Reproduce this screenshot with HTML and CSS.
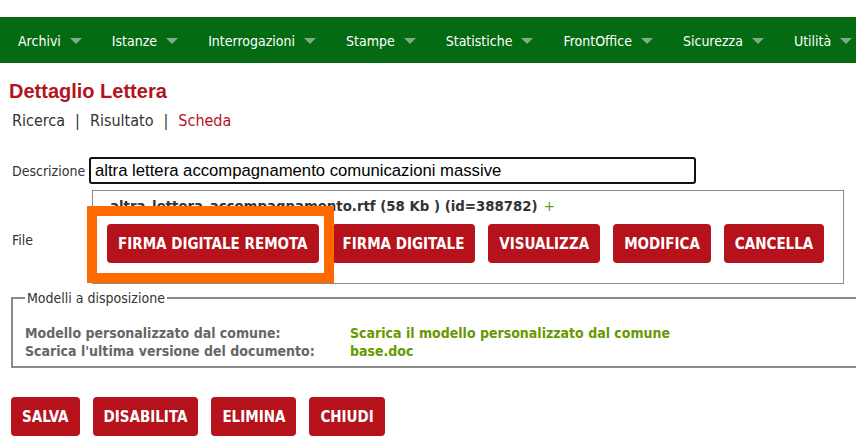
FILE: index.html
```html
<!DOCTYPE html>
<html lang="it">
<head>
<meta charset="utf-8">
<title>Dettaglio Lettera</title>
<link rel="stylesheet" href="styles.css">
</head>
<body>
<div class="page">
  <nav class="menu">
    <div class="menu-item">Archivi<span class="caret"></span></div>
    <div class="menu-item">Istanze<span class="caret"></span></div>
    <div class="menu-item">Interrogazioni<span class="caret"></span></div>
    <div class="menu-item">Stampe<span class="caret"></span></div>
    <div class="menu-item">Statistiche<span class="caret"></span></div>
    <div class="menu-item">FrontOffice<span class="caret"></span></div>
    <div class="menu-item">Sicurezza<span class="caret"></span></div>
    <div class="menu-item">Utilità<span class="caret"></span></div>
  </nav>

  <main class="content">
    <h1 class="title">Dettaglio Lettera</h1>
    <div class="crumbs">
      <span>Ricerca</span><span class="sep">|</span><span>Risultato</span><span class="sep">|</span><span class="current">Scheda</span>
    </div>

    <div class="form-row desc-row">
      <label class="label">Descrizione</label>
      <div class="input">altra lettera accompagnamento comunicazioni massive</div>
    </div>

    <div class="form-row file-row">
      <label class="label file-label">File</label>
      <div class="file-box">
        <div class="file-name">altra_lettera_accompagnamento.rtf (58 Kb ) (id=388782)<span class="plus">+</span></div>
        <div class="btn-row">
          <span class="btn-wrap">
            <button class="btn">FIRMA DIGITALE REMOTA</button>
            <span class="highlight"></span>
          </span>
          <button class="btn">FIRMA DIGITALE</button>
          <button class="btn">VISUALIZZA</button>
          <button class="btn">MODIFICA</button>
          <button class="btn">CANCELLA</button>
        </div>
      </div>
    </div>

    <fieldset class="models">
      <legend class="legend">Modelli a disposizione</legend>
      <div class="model-grid">
        <span class="model-key">Modello personalizzato dal comune:</span>
        <span class="model-link">Scarica il modello personalizzato dal comune</span>
        <span class="model-key">Scarica l'ultima versione del documento:</span>
        <span class="model-link">base.doc</span>
      </div>
    </fieldset>

    <div class="actions">
      <button class="btn">SALVA</button>
      <button class="btn">DISABILITA</button>
      <button class="btn">ELIMINA</button>
      <button class="btn">CHIUDI</button>
    </div>
  </main>
</div>
</body>
</html>
```

FILE: styles.css
```css
html, body {
  margin: 0;
  padding: 0;
  background: #ffffff;
  overflow: hidden;
}

.page {
  width: 900px;
  padding-top: 17px;
  font-family: "DejaVu Sans Condensed", "DejaVu Sans", sans-serif;
  color: #333333;
}

.menu {
  display: flex;
  height: 46px;
  align-items: center;
  background: #046b12;
}

.menu-item {
  display: flex;
  align-items: center;
  gap: 9px;
  padding: 1px 12px 0 18px;
  color: #ffffff;
  font-size: 14px;
}

.caret {
  width: 0;
  height: 0;
  border-left: 6px solid transparent;
  border-right: 6px solid transparent;
  border-top: 6px solid #80ae84;
}

.content {
  padding: 0 0 0 10px;
}

.title {
  margin: 17px 0 0 -1px;
  font-family: "Liberation Sans", Arial, sans-serif;
  font-size: 20px;
  font-weight: bold;
  color: #b3141d;
  line-height: 23px;
}

.crumbs {
  margin-top: 8px;
  display: flex;
  gap: 10px;
  padding-left: 2px;
  font-size: 16px;
  line-height: 20px;
  color: #333333;
}

.crumbs .current {
  color: #b3141d;
}

.form-row {
  display: flex;
  align-items: center;
}

.label {
  width: 77px;
  padding-left: 2px;
  font-size: 14px;
  color: #333333;
}

.desc-row {
  margin-top: 26px;
}

.input {
  width: 595px;
  height: 23px;
  padding: 0 4px;
  border: 2px solid #111111;
  border-radius: 3px;
  font-family: "Liberation Sans", Arial, sans-serif;
  font-size: 16.7px;
  line-height: 23px;
  color: #000000;
}

.file-row {
  margin-top: 6px;
}

.file-label {
  width: 80px;
  padding-top: 6px;
}

.file-box {
  width: 752px;
  height: 94px;
  border: 1px solid #8a8a8a;
  padding: 0 0 0 14px;
  box-sizing: border-box;
}

.file-name {
  margin-top: 6px;
  padding-left: 3px;
  font-size: 14.8px;
  font-weight: bold;
  color: #333333;
  line-height: 18px;
}

.plus {
  margin-left: 6px;
  font-weight: normal;
  color: #5e9a12;
}

.btn-row {
  display: flex;
  gap: 13px;
  margin-top: 9px;
}

.btn-wrap {
  position: relative;
  display: flex;
}

.highlight {
  position: absolute;
  top: -18px;
  right: -15px;
  bottom: -20px;
  left: -20px;
  border: 10px solid #ff6a00;
  pointer-events: none;
}

.btn {
  height: 39px;
  padding: 0 11px;
  border: none;
  border-radius: 4px;
  background: #b5121b;
  color: #ffffff;
  font-family: "DejaVu Sans Condensed", "DejaVu Sans", sans-serif;
  font-size: 15px;
  font-weight: bold;
  cursor: pointer;
}

.models {
  margin: 6px 0 0 1px;
  width: 880px;
  padding: 18px 12px 6px 12px;
  border: 2px solid #8a8a8a;
}

.legend {
  padding: 0 2px;
  margin-left: 0;
  font-size: 14px;
  color: #333333;
}

.model-grid {
  display: grid;
  grid-template-columns: 325px auto;
  font-size: 14px;
  font-weight: bold;
  line-height: 18px;
}

.model-key {
  color: #666666;
}

.model-link {
  color: #669900;
}

.actions {
  display: flex;
  gap: 13px;
  margin-top: 29px;
  padding-left: 1px;
}
```
